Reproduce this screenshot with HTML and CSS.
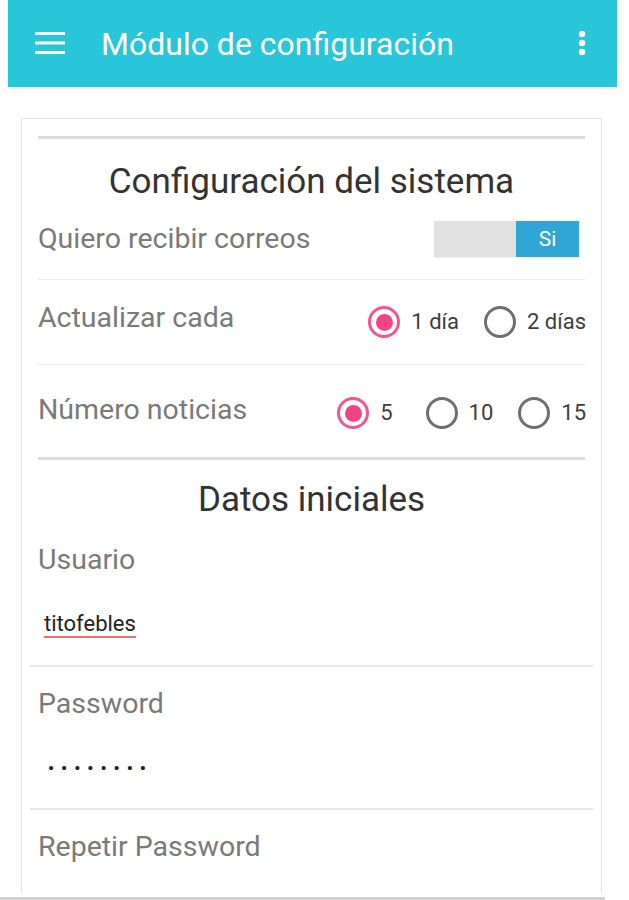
FILE: index.html
```html
<!DOCTYPE html>
<html lang="es">
<head>
<meta charset="utf-8">
<title>Módulo de configuración</title>
<link rel="stylesheet" href="styles.css">
</head>
<body>
<div class="page">
  <header class="appbar">
    <span class="menu-icon">
      <svg width="30" height="22" viewBox="0 0 30 22"><rect x="0" y="0" width="30" height="3" fill="#fff"/><rect x="0" y="9.5" width="30" height="3" fill="#fff"/><rect x="0" y="19" width="30" height="3" fill="#fff"/></svg>
    </span>
    <h1 class="appbar-title">Módulo de configuración</h1>
    <span class="more-icon">
      <svg width="8" height="26" viewBox="0 0 8 26"><circle cx="4" cy="4" r="3.2" fill="#fff"/><circle cx="4" cy="13" r="3.2" fill="#fff"/><circle cx="4" cy="22" r="3.2" fill="#fff"/></svg>
    </span>
  </header>

  <main class="card">
    <div class="rule"></div>
    <h2 class="section-title first">Configuración del sistema</h2>

    <div class="row row-toggle">
      <span class="label">Quiero recibir correos</span>
      <span class="toggle"><span class="toggle-off"></span><span class="toggle-on">Si</span></span>
    </div>

    <div class="row row-update">
      <span class="label">Actualizar cada</span>
      <span class="radios">
        <span class="radio-item"><span class="radio checked"></span><span class="radio-text">1 día</span></span>
        <span class="radio-item"><span class="radio"></span><span class="radio-text">2 días</span></span>
      </span>
    </div>

    <div class="row row-news">
      <span class="label">Número noticias</span>
      <span class="radios">
        <span class="radio-item wide"><span class="radio checked"></span><span class="radio-text">5</span></span>
        <span class="radio-item"><span class="radio"></span><span class="radio-text">10</span></span>
        <span class="radio-item"><span class="radio"></span><span class="radio-text">15</span></span>
      </span>
    </div>

    <div class="rule"></div>
    <h2 class="section-title second">Datos iniciales</h2>

    <div class="field">
      <div class="field-label">Usuario</div>
      <div class="field-input"><span class="typed">titofebles</span></div>
    </div>
    <div class="field">
      <div class="field-label">Password</div>
      <div class="field-input"><span class="dots">••••••••</span></div>
    </div>
    <div class="field">
      <div class="field-label">Repetir Password</div>
    </div>
  </main>
  <div class="window-edge"></div>
</div>
</body>
</html>
```

FILE: styles.css
```css
* { box-sizing: border-box; }
html, body { margin: 0; padding: 0; background: #fff; }
body { font-family: Roboto, "Noto Sans", sans-serif; overflow: hidden; }

.page {
  height: 900px;
  width: 629px;
  display: flex;
  flex-direction: column;
  overflow: hidden;
}

.appbar {
  flex: none;
  height: 87px;
  margin: 0 12px 0 8px;
  background: #29c5d9;
  display: flex;
  align-items: center;
  padding-left: 27px;
  padding-right: 31px;
  box-shadow: 0 1px 2px rgba(0,0,0,0.12);
}
.menu-icon { display: flex; width: 30px; height: 22px; margin-top: -1px; }
.appbar-title {
  margin: 0 0 0 36px;
  flex: 1;
  color: #fff;
  font-weight: 400;
  font-size: 32px;
  line-height: 40px;
}
.more-icon { display: flex; margin-top: -2px; }

.window-edge {
  flex: none;
  width: 605px;
  height: 3px;
  background: #d0d0d0;
}

.card {
  flex: 1;
  margin: 31px 0 4px 21px;
  width: 581px;
  border: 1px solid #e6e6e6;
  border-bottom: none;
  padding: 17px 16px 0 16px;
}

.rule { height: 3px; background: #dcdcdc; }

.section-title {
  margin: 0;
  text-align: center;
  font-weight: 400;
  color: #333;
  font-size: 35px;
  line-height: 44px;
}
.section-title.first { padding-top: 21px; height: 66px; }
.section-title.second { padding-top: 18px; height: 80px; }

.row {
  display: flex;
  align-items: center;
  justify-content: space-between;
  border-bottom: 1px solid #ececec;
}
.row-toggle { height: 75px; padding-bottom: 6px; }
.row-update { height: 85px; padding-bottom: 8px; }
.row-news { height: 92px; border-bottom: none; padding-bottom: 2px; }

.label {
  color: #7a7a7a;
  font-size: 28.5px;
  line-height: 36px;
}

.toggle {
  display: flex;
  height: 36px;
  width: 145px;
  margin-right: 6px;
  box-shadow: 0 1px 1px rgba(0,0,0,0.06);
}
.toggle-off { flex: 1; background: #e1e1e1; }
.toggle-on {
  width: 63px;
  background: #30a6d6;
  color: #fff;
  font-size: 21px;
  display: flex;
  align-items: center;
  justify-content: center;
}

.radios { display: flex; align-items: center; gap: 25px; }
.row-update .radios { margin-top: 8px; margin-right: -1px; }
.row-news .radios { margin-top: 6px; margin-right: -1px; }
.radio-item { display: flex; align-items: center; gap: 11px; }
.radio-item.wide { margin-right: 8px; }
.radio {
  width: 32px; height: 32px;
  border-radius: 50%;
  border: 3px solid #6f6f6f;
  position: relative;
  flex: none;
}
.radio.checked { border-color: #f2568a; }
.radio.checked::after {
  content: "";
  position: absolute;
  left: 4.5px; top: 4.5px;
  width: 17px; height: 17px;
  border-radius: 50%;
  background: #f0457f;
}
.radio-text { font-size: 22px; color: #3d3d3d; line-height: 28px; }

.field { margin: 0 -8px; }
.field-label {
  color: #7a7a7a;
  font-size: 28.5px;
  padding: 0 8px;
  height: 48px;
  line-height: 40px;
}
.field + .field .field-label { padding-top: 17px; height: 64px; }
.field-input {
  height: 79px;
  border-bottom: 2px solid #e8e8e8;
  padding: 24px 14px 0 14px;
}
.typed {
  font-size: 22px;
  color: #222;
  border-bottom: 2.5px solid #f07070;
  line-height: 24px;
  display: inline-block;
}
.dots {
  font-size: 17px;
  font-weight: 700;
  color: #222;
  letter-spacing: 7px;
  padding-left: 4px;
  display: inline-block;
  line-height: 26px;
}
```
